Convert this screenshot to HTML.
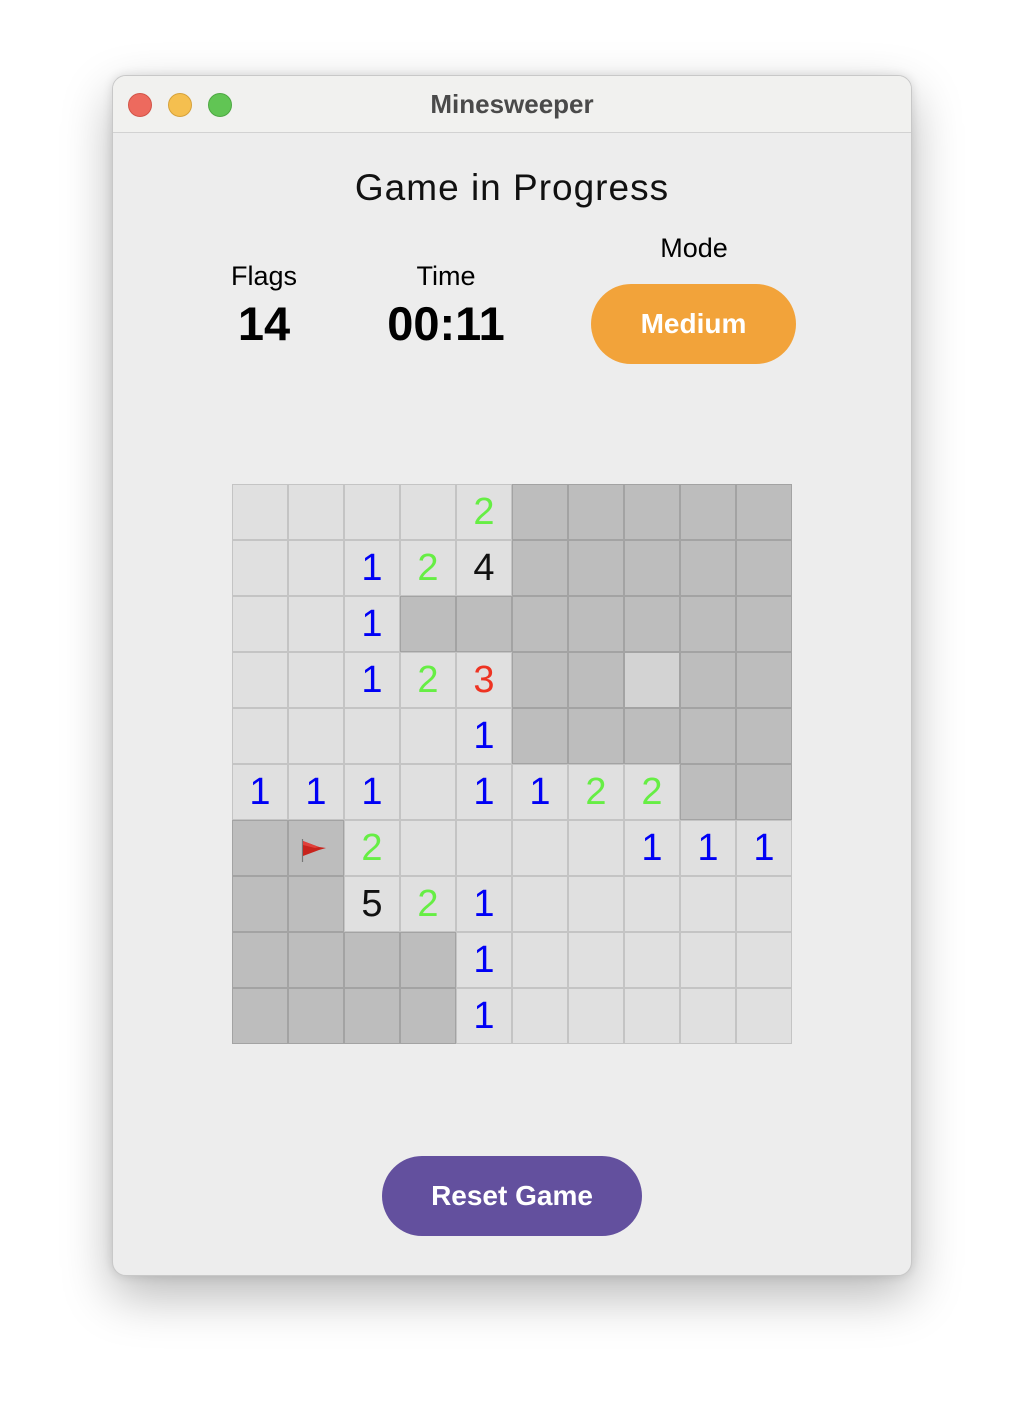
<!DOCTYPE html>
<html><head><meta charset="utf-8">
<style>
*{margin:0;padding:0;box-sizing:border-box}
body{width:1024px;height:1424px;background:#fff;font-family:"Liberation Sans",sans-serif;position:relative;overflow:hidden}
.win{position:absolute;left:112px;top:75px;width:800px;height:1201px;background:#ededed;border-radius:14px;border:1px solid #c8c8c8;box-shadow:0 20px 50px rgba(0,0,0,0.28),0 0 10px rgba(0,0,0,0.12);overflow:hidden}
.tb{position:absolute;left:0;top:0;width:100%;height:57px;background:#f1f1ef;border-bottom:1px solid #d2d2d2}
.dot{position:absolute;top:17px;width:24px;height:24px;border-radius:50%}
.tt{position:absolute;left:0;width:100%;top:13px;text-align:center;font-size:26px;font-weight:bold;color:#4a4a4a}
.abs{position:absolute;text-align:center}
.grid{position:absolute;left:119px;top:408px;width:560px;height:560px}
.c{position:absolute;width:56px;height:56px;border:1px solid #c4c4c4;background:#e0e0e0;font-size:38px;line-height:54px;text-align:center}
.u{background:#bdbdbd;border-color:#a3a3a3}
.l{background:#d3d3d3;border-color:#a3a3a3}
.b{color:#0000f5}.g{color:#66ee44}.r{color:#ee3322}.k{color:#111}
</style></head><body>
<div class="win">
<div class="tb">
<div class="dot" style="left:15px;background:#ed6a5e;border:1px solid #d25448"></div>
<div class="dot" style="left:55px;background:#f5bf4f;border:1px solid #d6a23a"></div>
<div class="dot" style="left:95px;background:#61c554;border:1px solid #4ea843"></div>
<div class="tt">Minesweeper</div>
</div>
<div class="abs" style="left:-1px;width:800px;top:91px;font-size:37px;color:#111;letter-spacing:1px">Game in Progress</div>
<div class="abs" style="left:81px;width:140px;top:185px;font-size:27px">Flags</div>
<div class="abs" style="left:81px;width:140px;top:220px;font-size:47px;font-weight:bold">14</div>
<div class="abs" style="left:253px;width:160px;top:185px;font-size:27px">Time</div>
<div class="abs" style="left:253px;width:160px;top:220px;font-size:47px;font-weight:bold">00:11</div>
<div class="abs" style="left:479px;width:204px;top:157px;font-size:27px">Mode</div>
<div class="abs" style="left:478px;top:208px;width:205px;height:80px;border-radius:40px;background:#f2a33a;color:#fff;font-size:28px;font-weight:bold;line-height:80px">Medium</div>
<div class="grid">
<div class="c" style="left:0;top:0"></div><div class="c" style="left:56px;top:0"></div><div class="c" style="left:112px;top:0"></div><div class="c" style="left:168px;top:0"></div><div class="c g" style="left:224px;top:0">2</div><div class="c u" style="left:280px;top:0"></div><div class="c u" style="left:336px;top:0"></div><div class="c u" style="left:392px;top:0"></div><div class="c u" style="left:448px;top:0"></div><div class="c u" style="left:504px;top:0"></div>
<div class="c" style="left:0;top:56px"></div><div class="c" style="left:56px;top:56px"></div><div class="c b" style="left:112px;top:56px">1</div><div class="c g" style="left:168px;top:56px">2</div><div class="c k" style="left:224px;top:56px">4</div><div class="c u" style="left:280px;top:56px"></div><div class="c u" style="left:336px;top:56px"></div><div class="c u" style="left:392px;top:56px"></div><div class="c u" style="left:448px;top:56px"></div><div class="c u" style="left:504px;top:56px"></div>
<div class="c" style="left:0;top:112px"></div><div class="c" style="left:56px;top:112px"></div><div class="c b" style="left:112px;top:112px">1</div><div class="c u" style="left:168px;top:112px"></div><div class="c u" style="left:224px;top:112px"></div><div class="c u" style="left:280px;top:112px"></div><div class="c u" style="left:336px;top:112px"></div><div class="c u" style="left:392px;top:112px"></div><div class="c u" style="left:448px;top:112px"></div><div class="c u" style="left:504px;top:112px"></div>
<div class="c" style="left:0;top:168px"></div><div class="c" style="left:56px;top:168px"></div><div class="c b" style="left:112px;top:168px">1</div><div class="c g" style="left:168px;top:168px">2</div><div class="c r" style="left:224px;top:168px">3</div><div class="c u" style="left:280px;top:168px"></div><div class="c u" style="left:336px;top:168px"></div><div class="c l" style="left:392px;top:168px"></div><div class="c u" style="left:448px;top:168px"></div><div class="c u" style="left:504px;top:168px"></div>
<div class="c" style="left:0;top:224px"></div><div class="c" style="left:56px;top:224px"></div><div class="c" style="left:112px;top:224px"></div><div class="c" style="left:168px;top:224px"></div><div class="c b" style="left:224px;top:224px">1</div><div class="c u" style="left:280px;top:224px"></div><div class="c u" style="left:336px;top:224px"></div><div class="c u" style="left:392px;top:224px"></div><div class="c u" style="left:448px;top:224px"></div><div class="c u" style="left:504px;top:224px"></div>
<div class="c b" style="left:0;top:280px">1</div><div class="c b" style="left:56px;top:280px">1</div><div class="c b" style="left:112px;top:280px">1</div><div class="c" style="left:168px;top:280px"></div><div class="c b" style="left:224px;top:280px">1</div><div class="c b" style="left:280px;top:280px">1</div><div class="c g" style="left:336px;top:280px">2</div><div class="c g" style="left:392px;top:280px">2</div><div class="c u" style="left:448px;top:280px"></div><div class="c u" style="left:504px;top:280px"></div>
<div class="c u" style="left:0;top:336px"></div><div class="c u" style="left:56px;top:336px"><svg width="54" height="54" viewBox="0 0 54 54" style="position:absolute;left:0;top:0"><line x1="13.5" y1="18" x2="13.5" y2="41" stroke="#777" stroke-width="1.2"/><path d="M14 20 L30 26 L37 27 L30 29 L14 35 Z" fill="#c8231c"/><path d="M14 20 L30 26 L26 27 L14 24 Z" fill="#e0403a"/></svg></div><div class="c g" style="left:112px;top:336px">2</div><div class="c" style="left:168px;top:336px"></div><div class="c" style="left:224px;top:336px"></div><div class="c" style="left:280px;top:336px"></div><div class="c" style="left:336px;top:336px"></div><div class="c b" style="left:392px;top:336px">1</div><div class="c b" style="left:448px;top:336px">1</div><div class="c b" style="left:504px;top:336px">1</div>
<div class="c u" style="left:0;top:392px"></div><div class="c u" style="left:56px;top:392px"></div><div class="c k" style="left:112px;top:392px">5</div><div class="c g" style="left:168px;top:392px">2</div><div class="c b" style="left:224px;top:392px">1</div><div class="c" style="left:280px;top:392px"></div><div class="c" style="left:336px;top:392px"></div><div class="c" style="left:392px;top:392px"></div><div class="c" style="left:448px;top:392px"></div><div class="c" style="left:504px;top:392px"></div>
<div class="c u" style="left:0;top:448px"></div><div class="c u" style="left:56px;top:448px"></div><div class="c u" style="left:112px;top:448px"></div><div class="c u" style="left:168px;top:448px"></div><div class="c b" style="left:224px;top:448px">1</div><div class="c" style="left:280px;top:448px"></div><div class="c" style="left:336px;top:448px"></div><div class="c" style="left:392px;top:448px"></div><div class="c" style="left:448px;top:448px"></div><div class="c" style="left:504px;top:448px"></div>
<div class="c u" style="left:0;top:504px"></div><div class="c u" style="left:56px;top:504px"></div><div class="c u" style="left:112px;top:504px"></div><div class="c u" style="left:168px;top:504px"></div><div class="c b" style="left:224px;top:504px">1</div><div class="c" style="left:280px;top:504px"></div><div class="c" style="left:336px;top:504px"></div><div class="c" style="left:392px;top:504px"></div><div class="c" style="left:448px;top:504px"></div><div class="c" style="left:504px;top:504px"></div>
</div>
<div class="abs" style="left:269px;top:1080px;width:260px;height:80px;border-radius:40px;background:#63509e;color:#fff;font-size:28px;font-weight:bold;line-height:80px">Reset Game</div>
</div>
</body></html>
